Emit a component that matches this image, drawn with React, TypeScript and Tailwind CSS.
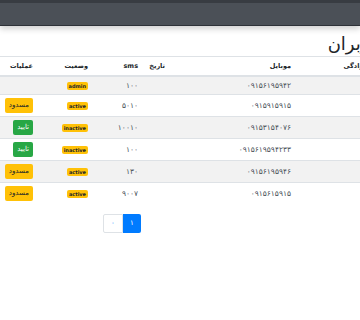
const rows = [
  { mobile: "۰۹۱۵۶۱۹۵۹۴۲", sms: "۱۰۰", status: "admin", action: null },
  { mobile: "۰۹۱۵۹۱۵۹۱۵", sms: "۵۰۱۰", status: "active", action: "block" },
  { mobile: "۰۹۱۵۳۱۵۴۰۷۶", sms: "۱۰۰۱۰", status: "inactive", action: "approve" },
  { mobile: "۰۹۱۵۶۱۹۵۹۴۲۳۳", sms: "۱۰۰", status: "inactive", action: "approve" },
  { mobile: "۰۹۱۵۶۱۹۵۹۴۶", sms: "۱۳۰", status: "active", action: "block" },
  { mobile: "۰۹۱۵۶۱۵۹۱۵", sms: "۹۰۰۷", status: "active", action: "block" },
];

export default function App() {
  return (
    <div
      className="w-[360px] h-[320px] overflow-hidden bg-white text-[#212529]"
      style={{ fontFamily: '"DejaVu Sans", sans-serif' }}
    >
      <nav className="h-[26px] bg-[#4b5057] border-t-[3px] border-t-[#383c42] border-b border-b-[#2e3238] shadow-[0_3px_6px_rgba(0,0,0,0.18)]" />

      <div dir="rtl" className="w-[440px]">
        <h1 className="pt-[6px] pr-0 mr-[-6px] text-[18px] leading-[24px] h-[30px] whitespace-nowrap">مدیریت کاربران</h1>

        <table className="table-fixed w-[440px] border-collapse text-right">
          <colgroup>
            <col className="w-[52px]" />
            <col className="w-[94px]" />
            <col className="w-[126px]" />
            <col className="w-[27px]" />
            <col className="w-[50px]" />
            <col className="w-[55px]" />
            <col className="w-[36px]" />
          </colgroup>
          <thead>
            <tr className="border-t border-t-[#dee2e6] border-b-2 border-b-[#dee2e6] text-[6.5px] font-bold">
              <th className="px-[3px] py-[4px] leading-[10px]">نام</th>
              <th className="px-[3px] py-[4px] leading-[10px] whitespace-nowrap">نام خانوادگی</th>
              <th className="px-[3px] py-[4px] leading-[10px]">موبایل</th>
              <th className="px-[3px] py-[4px] leading-[10px]">تاریخ</th>
              <th className="px-[3px] py-[4px] leading-[10px]">sms</th>
              <th className="px-[3px] py-[4px] leading-[10px]">وضعیت</th>
              <th className="px-[3px] py-[4px] leading-[10px]">عملیات</th>
            </tr>
          </thead>
          <tbody className="text-[7.5px] text-[#495057]">
            {rows.map((r, i) => (
              <tr key={i} className={`border-t border-t-[#dee2e6] ${i % 2 === 0 ? "bg-[#f2f2f2]" : "bg-white"}`}>
                <td className="px-[3px] py-[3px]"></td>
                <td className="px-[3px] py-[3px]"></td>
                <td className="px-[3px] py-[3px] leading-[11px]">{r.mobile}</td>
                <td className="px-[3px] py-[3px]"></td>
                <td className="px-[3px] py-[3px] leading-[11px]">{r.sms}</td>
                <td className="px-[3px] py-[3px] leading-[11px]">
                  <span dir="ltr" className="inline-block bg-[#ffc107] text-[#212529] text-[5px] leading-[8px] font-bold px-[2px] rounded-[2px]">
                    {r.status}
                  </span>
                </td>
                <td className="px-[3px] py-[3px] leading-[11px]">
                  {r.action === "block" && (
                    <button className="h-[15px] px-[4px] bg-[#ffc107] text-[#212529] text-[7px] rounded-[2px]">مسدود</button>
                  )}
                  {r.action === "approve" && (
                    <button className="h-[15px] px-[4px] bg-[#28a745] text-white text-[7px] rounded-[2px]">تایید</button>
                  )}
                </td>
              </tr>
            ))}
          </tbody>
        </table>
      </div>

      <div className="flex ml-[103px] mt-[10px] text-[7px]">
        <span className="w-[20px] h-[19px] flex items-center justify-center border border-[#dee2e6] text-[#007bff] rounded-l-[2px]">۰</span>
        <span className="w-[18px] h-[19px] flex items-center justify-center bg-[#007bff] text-white rounded-r-[2px]">۱</span>
      </div>
    </div>
  );
}
